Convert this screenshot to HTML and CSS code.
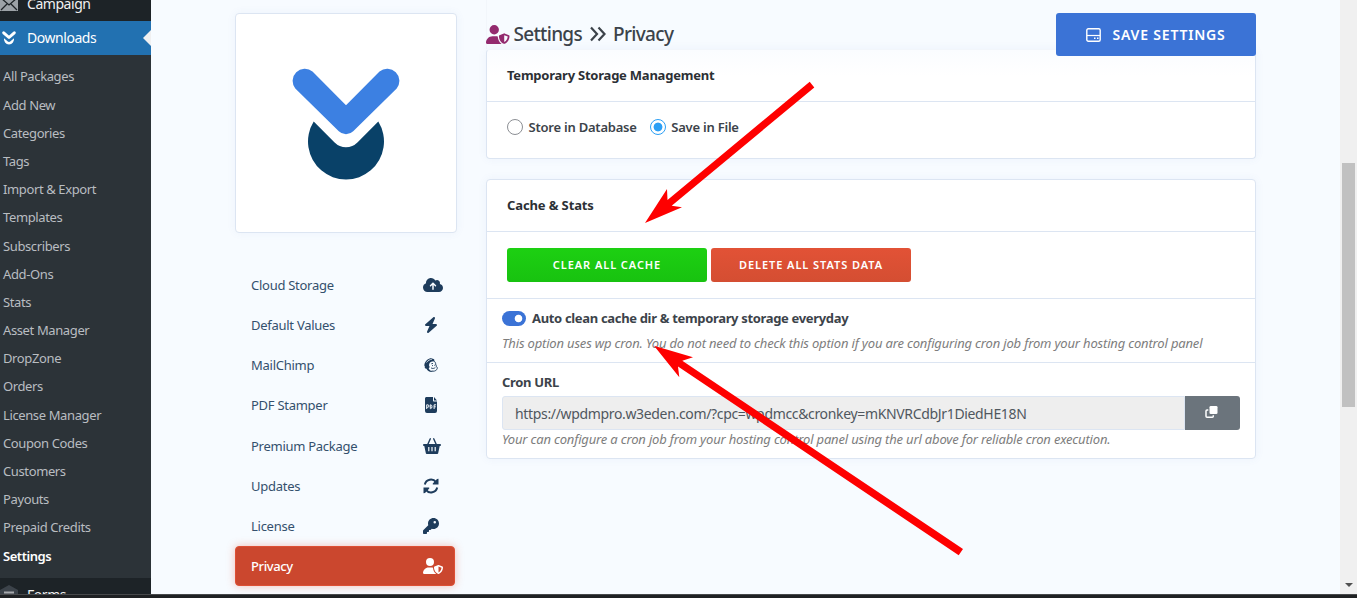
FILE: index.html
```html
<!DOCTYPE html>
<html lang="en">
<head>
    <meta charset="UTF-8">
    <meta name="viewport" content="width=device-width, initial-scale=1.0">
    <title>Settings - Privacy</title>
    <link rel="stylesheet" href="styles.css">
</head>
<body>
    <div class="page">
        <aside class="sidebar">
            <div class="menu-item menu-campaign">
                <svg class="menu-icon" viewBox="0 0 18 14"><rect width="18" height="14" fill="#9ca2a7"/><path d="M1 1l8 7 8-7M1 13l6-6M17 13l-6-6" fill="none" stroke="#1d2327" stroke-width="1.3"/></svg>
                <span>Campaign</span>
            </div>
            <div class="menu-item menu-downloads">
                <svg class="menu-icon" viewBox="0 0 18 16"><path d="M3.700 2.800L9 7.500l5.300-4.700" fill="none" stroke="#fff" stroke-width="3" stroke-linecap="round" stroke-linejoin="round"/><path d="M4 8.300L7.500 11.300a2.300 2.300 0 0 0 3 0L14 8.300a5.100 5.100 0 1 1-10 0z" fill="#fff"/></svg>
                <span>Downloads</span>
            </div>
            <ul class="submenu">
                <li>All Packages</li>
                <li>Add New</li>
                <li>Categories</li>
                <li>Tags</li>
                <li>Import &amp; Export</li>
                <li>Templates</li>
                <li>Subscribers</li>
                <li>Add-Ons</li>
                <li>Stats</li>
                <li>Asset Manager</li>
                <li>DropZone</li>
                <li>Orders</li>
                <li>License Manager</li>
                <li>Coupon Codes</li>
                <li>Customers</li>
                <li>Payouts</li>
                <li>Prepaid Credits</li>
                <li class="current">Settings</li>
            </ul>
            <div class="menu-item menu-forms">
                <svg class="menu-icon" viewBox="0 0 18 20"><path d="M9 0l9 5v10l-9 5-9-5V5z" fill="#3c434a"/><path d="M4 7.5h10M4 12h10" stroke="#a7aaad" stroke-width="2"/></svg>
                <span>Forms</span>
            </div>
        </aside>

        <main class="content">
            <div class="left-col">
                <div class="logo-card">
                    <svg width="110" height="114" viewBox="0 0 110 114">
                        <path d="M22.700 54.500L43.600 75.500a16 16 0 0 0 22.800 0L87.300 54.500A38 38 0 1 1 22.700 54.500z" fill="#094168"/>
                        <path d="M21.500 4.500L55 38.300 88.500 4.500A12.200 12.200 0 0 1 105.700 21.600L62.200 64.200a10.200 10.200 0 0 1-14.400 0L4.300 21.600A12.200 12.200 0 0 1 21.500 4.500z" fill="#3c80e2"/>
                    </svg>
                </div>
                <ul class="tabs">
                    <li><span>Cloud Storage</span><svg class="w20" viewBox="0 0 640 512"><path d="M144 480C64.500 480 0 415.500 0 336c0-62.800 40.200-116.200 96.200-135.900c-.1-2.700-.2-5.400-.2-8.100c0-88.400 71.600-160 160-160c59.300 0 111 32.200 138.700 80.200C409.900 102 428.300 96 448 96c53 0 96 43 96 96c0 12.200-2.300 23.800-6.400 34.600C596 238.400 640 290.100 640 352c0 70.700-57.300 128-128 128H144zm79-217c-9.400 9.400-9.400 24.600 0 33.900s24.600 9.400 33.900 0l39-39V392c0 13.300 10.700 24 24 24s24-10.700 24-24V257.900l39 39c9.400 9.400 24.600 9.400 33.900 0s9.400-24.600 0-33.900l-80-80c-9.400-9.400-24.600-9.400-33.900 0l-80 80z"/></svg></li>
                    <li><span>Default Values</span><svg viewBox="-32 0 512 512"><path d="M349.400 44.600c5.900-13.700 1.500-29.700-10.600-38.500s-28.600-8-39.900 1.800l-256 224c-10 8.800-13.600 22.900-8.900 35.300S50.700 288 64 288H175.500L98.600 467.400c-5.900 13.700-1.500 29.700 10.600 38.500s28.600 8 39.900-1.800l256-224c10-8.800 13.600-22.900 8.900-35.300s-16.600-20.700-30-20.700H272.500L349.400 44.600z"/></svg></li>
                    <li><span>MailChimp</span><svg viewBox="0 0 16 16"><path d="M2 9.800C.8 8.800 1.300 5.500 4 3 6 1.200 8.600.6 9.700 1.700c1.500 0 2.100 1.200 1.500 2.500L9 4.600C7 5 6.200 6.500 6 8.500c.8 1 .8 2.300-.3 2.900.8 2 2.800 3.200 5.300 3.200-3.700 1.100-6.500-.5-7.500-2.800C2 11.800 1.300 10.700 2 9.800z"/><path d="M3.500 5.500C5 3.500 7 2.400 8.800 2.400" fill="none" stroke="#f7fbff" stroke-width=".8"/><path d="M10.800 4.300c1.800.2 1.900 2.200 2 3.700.8.200.6.900.4 1.500 1.300.5 1.500 1.600.6 3-1 1.500-3.200 2.100-5.200 1.400M8.300 6.800l1.700-.4M8 10.900c1.500 1 3 .6 4.300-.3M9 8.600h1M11.300 8.300h1" fill="none" stroke="#1e3c5c" stroke-width=".9"/></svg></li>
                    <li><span>PDF Stamper</span><svg viewBox="0 0 16 16"><path d="M3.500 0H10v3.500c0 .6.400 1 1 1h3V14a2 2 0 0 1-2 2H4a2 2 0 0 1-2-2V1.500C2 .7 2.700 0 3.500 0z"/><path d="M11 0l3 3.500h-3z"/><path d="M3.700 12V7.800h1a1.200 1.200 0 0 1 0 2.500h-1M7.300 7.800v3.800h.4c1.700 0 1.700-3.800 0-3.800zM11.100 12V7.800h2M11.100 9.800h1.700" fill="none" stroke="#f7fbff" stroke-width="1"/></svg></li>
                    <li><span>Premium Package</span><svg class="w18" viewBox="0 0 18 16"><path d="M4.500 7L7.300.8M13.500 7L10.700.8" fill="none" stroke="#1e3c5c" stroke-width="1.400" stroke-linecap="round"/><path fill-rule="evenodd" d="M.8 6h16.400c1 0 1 1.800 0 1.900h-.5L15.200 15c-.1.600-.6 1-1.200 1H4c-.6 0-1.100-.4-1.200-1L1.300 7.900H.8C-.2 7.800-.2 6 .8 6zM5.200 9v4.200h1.200V9zM8.400 9v4.200h1.200V9zM11.600 9v4.200h1.200V9z"/></svg></li>
                    <li><span>Updates</span><svg viewBox="0 0 16 16"><path d="M1.800 6.500A6.300 6.300 0 0 1 13 4.200L14 5.500M14.200 9.500A6.300 6.300 0 0 1 3 11.800L2 10.500" fill="none" stroke="#1e3c5c" stroke-width="2"/><path d="M15.500.8v5.700H9.800V5.300h.2L14 1zM.5 15.200V9.500h5.700v1.200H6L2 15z"/></svg></li>
                    <li><span>License</span><svg viewBox="0 0 512 512"><path d="M336 352c97.200 0 176-78.800 176-176S433.200 0 336 0S160 78.800 160 176c0 18.700 2.900 36.800 8.300 53.700L7 391c-4.500 4.500-7 10.600-7 17v80c0 13.300 10.700 24 24 24h80c13.300 0 24-10.700 24-24V448h40c13.300 0 24-10.700 24-24V384h40c6.400 0 12.500-2.500 17-7l33.300-33.300c16.900 5.400 35 8.300 53.700 8.300zM376 96a40 40 0 1 1 0 80 40 40 0 1 1 0-80z"/></svg></li>
                    <li class="active"><span>Privacy</span><svg class="w20" viewBox="0 0 640 512"><path d="M224 256A128 128 0 1 0 224 0a128 128 0 1 0 0 256zm-45.700 48C79.800 304 0 383.800 0 482.300C0 498.700 13.300 512 29.700 512H418.300c1.800 0 3.500-.2 5.300-.5c-76.300-55.100-99.800-141-103.100-200.200c-16.100-4.800-33.100-7.300-50.700-7.300H178.300zm308.800-78.300l-120 48C358 277.400 352 286.200 352 296c0 63.300 25.900 168.800 134.800 214.200c5.900 2.500 12.600 2.500 18.500 0C614.100 464.800 640 359.300 640 296c0-9.800-6-18.600-15.100-22.300l-120-48c-5.700-2.300-12.100-2.300-17.800 0zM591.400 312c-3.900 50.700-27.200 116.700-95.400 149.700V273.800L591.400 312z"/></svg></li>
                </ul>
            </div>

            <div class="right-col">
                <header class="topbar">
                    <h1>
                        <svg width="23.500" height="19" viewBox="0 0 640 512"><path fill="#932a6e" d="M224 256A128 128 0 1 0 224 0a128 128 0 1 0 0 256zm-45.700 48C79.800 304 0 383.800 0 482.300C0 498.700 13.300 512 29.700 512H418.300c1.800 0 3.500-.2 5.300-.5c-76.300-55.100-99.800-141-103.100-200.200c-16.100-4.800-33.100-7.300-50.700-7.300H178.300zm308.800-78.300l-120 48C358 277.400 352 286.200 352 296c0 63.300 25.900 168.800 134.800 214.200c5.900 2.500 12.600 2.500 18.500 0C614.100 464.800 640 359.300 640 296c0-9.800-6-18.600-15.100-22.300l-120-48c-5.700-2.300-12.100-2.300-17.800 0zM591.400 312c-3.900 50.700-27.200 116.700-95.400 149.700V273.800L591.400 312z"/></svg>
                        <span class="crumb crumb-root">Settings</span>
                        <svg class="chevrons" width="18" height="16" viewBox="0 0 18 16"><path d="M2 1.500l6 6.500-6 6.500M9.500 1.500l6 6.500-6 6.500" fill="none" stroke="#3c434a" stroke-width="2.200"/></svg>
                        <span class="crumb">Privacy</span>
                    </h1>
                    <button class="btn-save">
                        <svg width="15" height="14" viewBox="0 0 15 14"><rect x=".8" y=".8" width="13.400" height="12.400" rx="1.500" fill="none" stroke="#fff" stroke-width="1.400"/><path d="M1 7.500h13" stroke="#fff" stroke-width="1.200"/><path d="M8 10.300h1.500M11 10.300h1.500" stroke="#fff" stroke-width="1.500"/></svg>
                        <span>Save Settings</span>
                    </button>
                </header>

                <section class="panel panel-storage">
                    <div class="panel-heading">Temporary Storage Management</div>
                    <div class="panel-body">
                        <label><i class="radio"></i><span>Store in Database</span></label>
                        <label><i class="radio checked"></i><span>Save in File</span></label>
                    </div>
                </section>

                <section class="panel panel-cache">
                    <div class="panel-heading">Cache &amp; Stats</div>
                    <div class="panel-body">
                        <button class="btn btn-success">Clear All Cache</button>
                        <button class="btn btn-danger">Delete All Stats Data</button>
                    </div>
                    <div class="panel-row row-auto">
                        <label><i class="switch"></i><span class="strong">Auto clean cache dir &amp; temporary storage everyday</span></label>
                        <em>This option uses wp cron. You do not need to check this option if you are configuring cron job from your hosting control panel</em>
                    </div>
                    <div class="panel-row row-cron">
                        <span class="strong">Cron URL</span>
                        <div class="input-group">
                            <div class="url">https://wpdmpro.w3eden.com/?cpc=wpdmcc&amp;cronkey=mKNVRCdbJr1DiedHE18N</div>
                            <button class="btn-copy" aria-label="Copy"><svg width="13" height="12" viewBox="0 0 13 12"><rect x="4.500" width="8" height="8" rx="1.300" fill="#fff"/><path d="M3.300 4H2a1 1 0 0 0-1 1v5.200a1 1 0 0 0 1 1h5.300a1 1 0 0 0 1-1V9.300" fill="none" stroke="#fff" stroke-width="1.500"/></svg></button>
                        </div>
                        <em>Your can configure a cron job from your hosting control panel using the url above for reliable cron execution.</em>
                    </div>
                </section>
            </div>
        </main>

        <div class="scrollbar"><div class="thumb"></div><div class="arrow-down"></div></div>
    </div>
    <div class="taskbar"></div>

    <svg class="arrows" viewBox="0 0 1357 598">
        <path d="M645 223L667 189 667.500 200 809.700 81.700 814.300 87.500 671.700 205.700 682 207.300z"/>
        <path d="M654 345.700L693 357.300 682.300 360.700 963 549 958.700 555.300 678 366.500 679.300 377.300z"/>
    </svg>
</body>
</html>
```
FILE: styles.css
```css
* {
    box-sizing: border-box;
}
body {
    margin: 0;
    height: 598px;
    overflow: hidden;
    position: relative;
    background: #f7fbff;
    font-family: 'Noto Sans', 'Open Sans', sans-serif;
    font-size: 13px;
    color: #3c434a;
}
ul {
    list-style: none;
    margin: 0;
    padding: 0;
}
button {
    border: 0;
    padding: 0;
    font-family: inherit;
    color: #fff;
}
.page {
    display: flex;
    height: 594px;
    overflow: hidden;
}
.taskbar {
    height: 4px;
    background: #1f2123;
    border-top: 1px solid #47494b;
}

/* admin menu */
.sidebar {
    width: 151px;
    flex: none;
    background: #1d2327;
    color: #f0f0f1;
    overflow: hidden;
}
.menu-item {
    display: flex;
    align-items: center;
    height: 34px;
    font-size: 14px;
    letter-spacing: -0.45px;
}
.menu-item span {
    margin-left: 9px;
    padding-bottom: 2px;
}
.menu-icon {
    width: 18px;
    height: 16px;
}
.menu-campaign {
    margin-top: -13px;
}
.menu-downloads {
    background: #2271b1;
    color: #fff;
}
.menu-downloads::after {
    content: '';
    margin-left: auto;
    border: 8px solid transparent;
    border-left: 0;
    border-right-color: #f0f0f1;
}
.submenu {
    background: #2c3338;
    padding-top: 7.4px;
    height: 523px;
    color: #b9bdc1;
    letter-spacing: -0.38px;
}
.submenu li {
    height: 28.2px;
    line-height: 28.2px;
    padding-left: 3px;
    white-space: nowrap;
}
.submenu .current {
    color: #fff;
    font-weight: 600;
    letter-spacing: -0.46px;
}
.menu-forms .menu-icon {
    height: 20px;
}

/* columns */
.content {
    flex: 1;
    display: flex;
    gap: 29px;
    padding: 0 84px;
}
.left-col {
    width: 222px;
    padding-top: 13px;
}
.right-col {
    width: 770px;
    flex: none;
}
.logo-card {
    height: 220px;
    padding-top: 2px;
    display: flex;
    align-items: center;
    justify-content: center;
    background: #fff;
    border: 1px solid #dce5f2;
    border-radius: 4px;
    box-shadow: 0 0 10px rgba(60, 110, 180, 0.06);
}
.tabs {
    width: 220px;
    margin-top: 32px;
    letter-spacing: -0.27px;
}
.tabs li {
    display: flex;
    align-items: center;
    justify-content: space-between;
    height: 40.15px;
    padding: 0 12px 0 16px;
    color: #34506d;
}
.tabs svg {
    width: 16px;
    height: 16px;
    margin-right: 4px;
    fill: #1e3c5c;
}
.tabs .w18 {
    width: 18px;
    margin-right: 2px;
}
.tabs .w20 {
    width: 20px;
    margin-right: 0;
}
.tabs .active {
    background: #cb472e;
    border: 1px solid #dd4f34;
    border-radius: 4px;
    padding: 0 11px 0 15px;
    color: #fff;
    font-weight: 500;
    letter-spacing: -0.4px;
    box-shadow: 0 0 9px rgba(226, 80, 50, 0.35);
}
.tabs .active svg {
    fill: #fff;
}

/* top bar */
.topbar {
    display: flex;
    justify-content: space-between;
    height: 49px;
    padding-top: 13px;
    border-left: 1px solid #f2f6fb;
}
h1 {
    display: flex;
    align-items: center;
    height: 42px;
    margin: 0 0 0 -1px;
    font-size: 19px;
    font-weight: 500;
    letter-spacing: -0.68px;
}
.crumb-root {
    margin-left: 4px;
}
.chevrons {
    margin: 0 6px 0 7px;
}
.btn-save {
    display: flex;
    align-items: center;
    justify-content: center;
    gap: 11px;
    width: 200px;
    height: 43px;
    background: #3b73d6;
    border-radius: 3px;
    font-size: 14px;
    font-weight: 600;
    letter-spacing: 0.8px;
    text-transform: uppercase;
}

/* panels */
.panel {
    background: #fff;
    border: 1px solid #dce5f2;
    border-radius: 4px;
    box-shadow: 0 0 10px rgba(60, 110, 180, 0.06);
}
.panel-heading {
    height: 52px;
    padding: 0 20px;
    line-height: 50px;
    border-bottom: 1px solid #dce5f2;
    font-weight: 700;
    letter-spacing: -0.23px;
    color: #2c3035;
}
.panel-cache .panel-heading {
    letter-spacing: -0.12px;
}
.panel-storage {
    height: 110px;
    border-top-color: #f2f6fb;
    background: linear-gradient(#fafcff, #fff 26px);
}
.panel-storage .panel-body {
    display: flex;
    gap: 13px;
    padding: 16px 20px;
    font-weight: 600;
    letter-spacing: -0.22px;
}
label {
    display: flex;
    align-items: center;
    height: 18px;
}
.radio {
    width: 16px;
    height: 16px;
    margin-right: 5.5px;
    border: 1px solid #8c8f94;
    border-radius: 50%;
    background: #fff;
}
.radio.checked {
    border-color: #2b9ff5;
    background: radial-gradient(circle, #2b9ff5 4px, #fff 4.8px);
}
.panel-cache {
    margin-top: 20px;
    height: 280px;
}
.panel-cache .panel-body {
    display: flex;
    gap: 4px;
    height: 67px;
    padding: 16px 20px;
    border-bottom: 1px solid #dce5f2;
}
.btn {
    width: 200px;
    height: 34px;
    padding-bottom: 2px;
    border-radius: 3px;
    font-size: 11px;
    font-weight: 600;
    letter-spacing: 0.93px;
    text-transform: uppercase;
}
.btn-success {
    background: linear-gradient(#1dd012, #18c210);
}
.btn-danger {
    background: linear-gradient(#e25236, #d44e32);
}
.panel-row {
    padding: 0 15px;
}
.strong {
    font-weight: 700;
    letter-spacing: -0.33px;
}
.panel-row em {
    display: block;
    color: #7d7d7d;
    white-space: nowrap;
    letter-spacing: -0.172px;
}
.row-auto {
    height: 64px;
    padding-top: 10px;
    border-bottom: 1px solid #dce5f2;
}
.row-auto em {
    margin-top: 7px;
}
.switch {
    width: 24px;
    height: 15px;
    margin-right: 6px;
    border-radius: 8px;
    background: radial-gradient(circle at 16.5px 7.5px, #fff 3.4px, #3b73d6 4.2px);
}
.row-cron {
    padding-top: 10px;
}
.row-cron .strong {
    display: block;
    line-height: 18px;
}
.input-group {
    display: flex;
    margin-top: 5px;
    height: 34px;
}
.url {
    flex: 1;
    padding-left: 12px;
    line-height: 34px;
    font-size: 14px;
    letter-spacing: -0.34px;
    color: #50575e;
    background: #eee;
    border: 1px solid #dce5f2;
    border-radius: 3px 0 0 3px;
}
.btn-copy {
    width: 55px;
    padding-right: 2px;
    background: #6b747c;
    border-radius: 0 3px 3px 0;
}

/* browser scrollbar */
.scrollbar {
    width: 17px;
    flex: none;
    display: flex;
    flex-direction: column;
    justify-content: space-between;
    align-items: center;
    padding: 163px 0 7px;
    background: #f0f0f0;
}
.thumb {
    width: 13px;
    height: 244px;
    background: #c1c1c1;
}
.arrow-down {
    border: 4px solid transparent;
    border-top-color: #505050;
    border-bottom: 0;
}

/* annotations over the page */
.arrows {
    position: absolute;
    left: 0;
    top: 0;
    width: 1357px;
    height: 598px;
    fill: #fe0000;
}
```
